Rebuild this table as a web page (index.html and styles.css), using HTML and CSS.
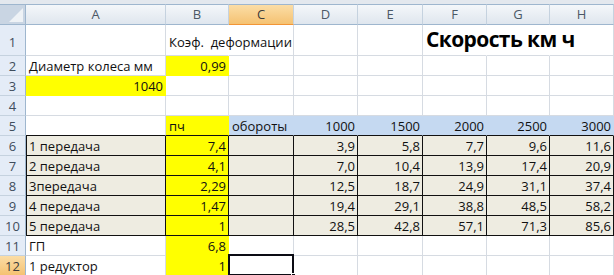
FILE: index.html
```html
<!DOCTYPE html>
<html lang="ru">
<head>
<meta charset="utf-8">
<link rel="stylesheet" href="styles.css">
</head>
<body>
<div class="strip"></div>
<div class="sheet">
  <div class="corner"><span class="tri"></span></div>
  <div class="ch">A</div><div class="ch">B</div><div class="ch sel">C</div><div class="ch">D</div><div class="ch">E</div><div class="ch">F</div><div class="ch">G</div><div class="ch">H</div>

  <div class="rh tall">1</div>
  <div class="c tall"></div><div class="c tall spill">Коэф.&nbsp; деформации</div><div class="c tall"></div><div class="c tall"></div><div class="c tall"></div><div class="c tall spill big">Скорость км ч</div><div class="c tall spill"></div><div class="c tall"></div>

  <div class="rh">2</div>
  <div class="c">Диаметр колеса мм</div><div class="c y r">0,99</div><div class="c"></div><div class="c"></div><div class="c"></div><div class="c"></div><div class="c"></div><div class="c"></div>

  <div class="rh">3</div>
  <div class="c y r">1040</div><div class="c"></div><div class="c"></div><div class="c"></div><div class="c"></div><div class="c"></div><div class="c"></div><div class="c"></div>

  <div class="rh">4</div>
  <div class="c"></div><div class="c"></div><div class="c"></div><div class="c"></div><div class="c"></div><div class="c"></div><div class="c"></div><div class="c"></div>

  <div class="rh">5</div>
  <div class="c hb"></div><div class="c y hb">пч</div><div class="c bl hb">обороты</div><div class="c bl hb r">1000</div><div class="c bl hb r">1500</div><div class="c bl hb r">2000</div><div class="c bl hb r">2500</div><div class="c bl hb r">3000</div>

  <div class="rh">6</div>
  <div class="c t first">1 передача</div><div class="c t y r">7,4</div><div class="c t"></div><div class="c t r">3,9</div><div class="c t r">5,8</div><div class="c t r">7,7</div><div class="c t r">9,6</div><div class="c t r">11,6</div>

  <div class="rh">7</div>
  <div class="c t first">2 передача</div><div class="c t y r">4,1</div><div class="c t"></div><div class="c t r">7,0</div><div class="c t r">10,4</div><div class="c t r">13,9</div><div class="c t r">17,4</div><div class="c t r">20,9</div>

  <div class="rh">8</div>
  <div class="c t first">3передача</div><div class="c t y r">2,29</div><div class="c t"></div><div class="c t r">12,5</div><div class="c t r">18,7</div><div class="c t r">24,9</div><div class="c t r">31,1</div><div class="c t r">37,4</div>

  <div class="rh">9</div>
  <div class="c t first">4 передача</div><div class="c t y r">1,47</div><div class="c t"></div><div class="c t r">19,4</div><div class="c t r">29,1</div><div class="c t r">38,8</div><div class="c t r">48,5</div><div class="c t r">58,2</div>

  <div class="rh">10</div>
  <div class="c t first">5 передача</div><div class="c t y r">1</div><div class="c t"></div><div class="c t r">28,5</div><div class="c t r">42,8</div><div class="c t r">57,1</div><div class="c t r">71,3</div><div class="c t r">85,6</div>

  <div class="rh">11</div>
  <div class="c">ГП</div><div class="c y r">6,8</div><div class="c"></div><div class="c"></div><div class="c"></div><div class="c"></div><div class="c"></div><div class="c"></div>

  <div class="rh sel">12</div>
  <div class="c">1 редуктор</div><div class="c y r">1</div><div class="c active"><span class="box"></span><span class="handle"></span></div><div class="c"></div><div class="c"></div><div class="c"></div><div class="c"></div><div class="c"></div>
</div>
</body>
</html>
```

FILE: styles.css
```css
* { box-sizing: border-box; }
html, body {
  margin: 0;
  padding: 0;
  background: #ffffff;
  overflow: hidden;
}
body {
  width: 614px;
  height: 275px;
  font-family: "Open Sans", "Noto Sans", sans-serif;
  font-size: 13px;
  color: #111;
}
.strip {
  height: 4px;
  background: #e3e8ee;
}
.sheet {
  display: grid;
  grid-template-columns: 26px 140px 63px 65px 64px 65px 64px 63px 64px;
  grid-template-rows: 21px 31px repeat(11, 20px);
}
.corner {
  position: relative;
  background: #c9d5e3;
  border-top: 1px solid #9eb6ce;
  border-right: 1px solid #9eb6ce;
  border-bottom: 1px solid #9eb6ce;
}
.tri {
  position: absolute;
  right: 2px;
  bottom: 2px;
  width: 0;
  height: 0;
  border-left: 14px solid transparent;
  border-bottom: 14px solid #eef2f6;
}
.ch {
  background: linear-gradient(#f4f7fa, #dfe6ee);
  border-top: 1px solid #9eb6ce;
  border-right: 1px solid #c5d2df;
  border-bottom: 1px solid #9eb6ce;
  color: #4b5866;
  text-align: center;
  line-height: 19px;
  padding-top: 0;
}
.ch.sel {
  background: linear-gradient(#fbdda6, #f5c272);
  border-bottom-color: #f29536;
  color: #3b3b3b;
}
.rh {
  background: #e4ecf7;
  border-right: 1px solid #9eb6ce;
  border-bottom: 1px solid #c5d2df;
  color: #3f4d5c;
  text-align: center;
  display: flex;
  align-items: flex-end;
  justify-content: center;
  line-height: 17px;
}
.rh.tall { padding-bottom: 4px; }
.rh.sel {
  background: linear-gradient(#fbdda6, #f5c272);
  color: #3b3b3b;
}
.c {
  position: relative;
  border-right: 1px solid #d6dbe2;
  border-bottom: 1px solid #d6dbe2;
  display: flex;
  align-items: flex-end;
  line-height: 17px;
  padding: 0 2px 0 3px;
  white-space: nowrap;
}
.c.tall { padding-bottom: 4px; }
.spill {
  overflow: visible;
  border-right-color: transparent;
  z-index: 1;
}
.big {
  font-weight: 700;
  font-size: 21px;
  letter-spacing: -0.6px;
  line-height: 24px;
  padding-bottom: 3px;
  color: #000;
}
.r { justify-content: flex-end; }
.y {
  background: #ffff00;
  border-right-color: #ffff00;
  border-bottom-color: #ffff00;
}
.bl {
  background: #c5d9f1;
  border-right-color: #c5d9f1;
}
.hb { border-bottom-color: #111; }
.t {
  background: #eeece1;
  border-right-color: #111;
  border-bottom-color: #111;
}
.t.y { background: #ffff00; }
.first { border-left: 1px solid #111; padding-left: 2px; }
.box {
  position: absolute;
  left: -1px;
  top: -2px;
  width: 66px;
  height: 22px;
  border: 2px solid #0c0c14;
}
.handle {
  position: absolute;
  right: -3px;
  bottom: -3px;
  width: 5px;
  height: 5px;
  background: #0c0c14;
  border: 1px solid #fff;
}
```
